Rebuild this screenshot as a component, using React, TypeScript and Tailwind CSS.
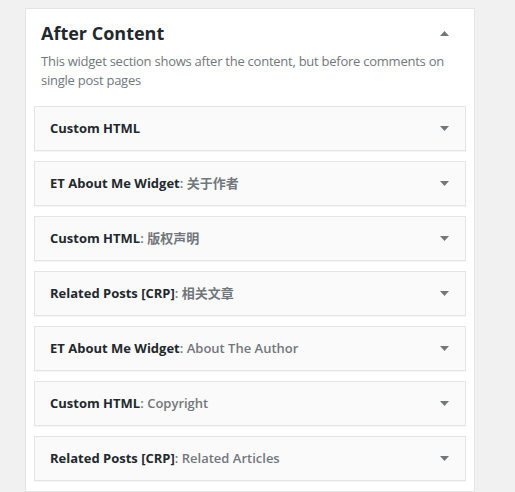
import React from 'react';

interface WidgetItem {
    name: string;
    title?: string;
}

const widgets: WidgetItem[] = [
    { name: 'Custom HTML' },
    { name: 'ET About Me Widget', title: '关于作者' },
    { name: 'Custom HTML', title: '版权声明' },
    { name: 'Related Posts [CRP]', title: '相关文章' },
    { name: 'ET About Me Widget', title: 'About The Author' },
    { name: 'Custom HTML', title: 'Copyright' },
    { name: 'Related Posts [CRP]', title: 'Related Articles' },
];

const Caret: React.FC<{ up?: boolean }> = ({ up }) => (
    <svg width="9" height="5" viewBox="0 0 9 5" className="shrink-0">
        {up ? <path d="M0 5 L4.5 0 L9 5 Z" fill="#72777c" /> : <path d="M0 0 L9 0 L4.5 5 Z" fill="#72777c" />}
    </svg>
);

const App: React.FC = () => {
    return (
        <div
            className="min-h-[492px] w-[515px] bg-[#f1f1f1] pt-[8px] pl-[25px]"
            style={{ fontFamily: '"Open Sans", "Noto Sans CJK SC", sans-serif' }}
        >
            <div className="w-[450px] border border-[#e5e5e5] bg-white pb-[10px]">
                <div className="px-[15px] pt-[11px]">
                    <div className="flex items-center justify-between pr-[10px]">
                        <h2 className="text-[18px] font-bold leading-[26px] text-[#23282d]">After Content</h2>
                        <Caret up />
                    </div>
                    <p className="mt-[6px] text-[13px] leading-[19px] tracking-[-0.25px] text-[#72777c]">
                        This widget section shows after the content, but before comments on single post pages
                    </p>
                </div>
                <div className="mt-[16px] flex flex-col gap-[10px] px-[8px]">
                    {widgets.map((w, i) => (
                        <div
                            key={i}
                            className="flex h-[45px] items-center justify-between border border-[#e5e5e5] bg-[#fafafa] pl-[15px] pr-[16px] shadow-[0_1px_1px_rgba(0,0,0,0.04)]"
                        >
                            <span className="text-[13px] font-bold text-[#23282d]">
                                {w.name}
                                {w.title && <span className="font-semibold text-[#72777c]">: {w.title}</span>}
                            </span>
                            <Caret />
                        </div>
                    ))}
                </div>
            </div>
        </div>
    );
};

export default App;
